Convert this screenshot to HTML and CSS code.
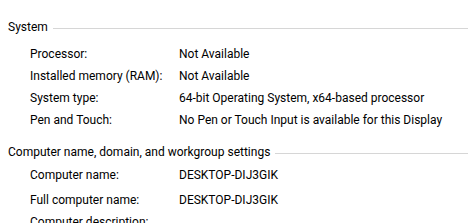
FILE: index.html
```html
<!DOCTYPE html>
<html lang="en">
<head>
    <meta charset="UTF-8">
    <meta name="viewport" content="width=device-width, initial-scale=1.0">
    <title>System</title>
    <link rel="stylesheet" href="styles.css">
</head>
<body>
    <section class="group">
        <div class="group-title">
            <span>System</span>
            <div class="rule"></div>
        </div>
        <div class="rows">
            <div class="row"><span class="label">Processor:</span><span class="value">Not Available</span></div>
            <div class="row"><span class="label">Installed memory (RAM):</span><span class="value">Not Available</span></div>
            <div class="row"><span class="label">System type:</span><span class="value">64-bit Operating System, x64-based processor</span></div>
            <div class="row"><span class="label">Pen and Touch:</span><span class="value">No Pen or Touch Input is available for this Display</span></div>
        </div>
    </section>

    <section class="group second">
        <div class="group-title">
            <span>Computer name, domain, and workgroup settings</span>
            <div class="rule"></div>
        </div>
        <div class="rows tight">
            <div class="row"><span class="label">Computer name:</span><span class="value">DESKTOP-DIJ3GIK</span></div>
            <div class="row tall"><span class="label">Full computer name:</span><span class="value">DESKTOP-DIJ3GIK</span></div>
            <div class="row"><span class="label">Computer description:</span><span class="value"></span></div>
        </div>
    </section>
</body>
</html>
```

FILE: styles.css
```css
body {
    margin: 0;
    padding: 19px 0 0 8px;
    font-family: Roboto, "Liberation Sans", sans-serif;
    font-size: 12px;
    color: #000;
    background: #fff;
    overflow: hidden;
}

.group-title {
    display: flex;
    align-items: center;
    height: 16px;
    line-height: 16px;
}

.group-title .rule {
    flex: 1;
    height: 1px;
    margin: 3px 0 0 5px;
    background: #d6d6d6;
}

.rows {
    margin-top: 8px;
    padding-left: 22px;
}

.rows.tight {
    margin-top: 4px;
}

.row {
    display: flex;
    height: 22px;
    line-height: 22px;
}

.row.tall {
    height: 25px;
    line-height: 28px;
}

.label {
    width: 149px;
}

.second {
    margin-top: 13px;
}
```
